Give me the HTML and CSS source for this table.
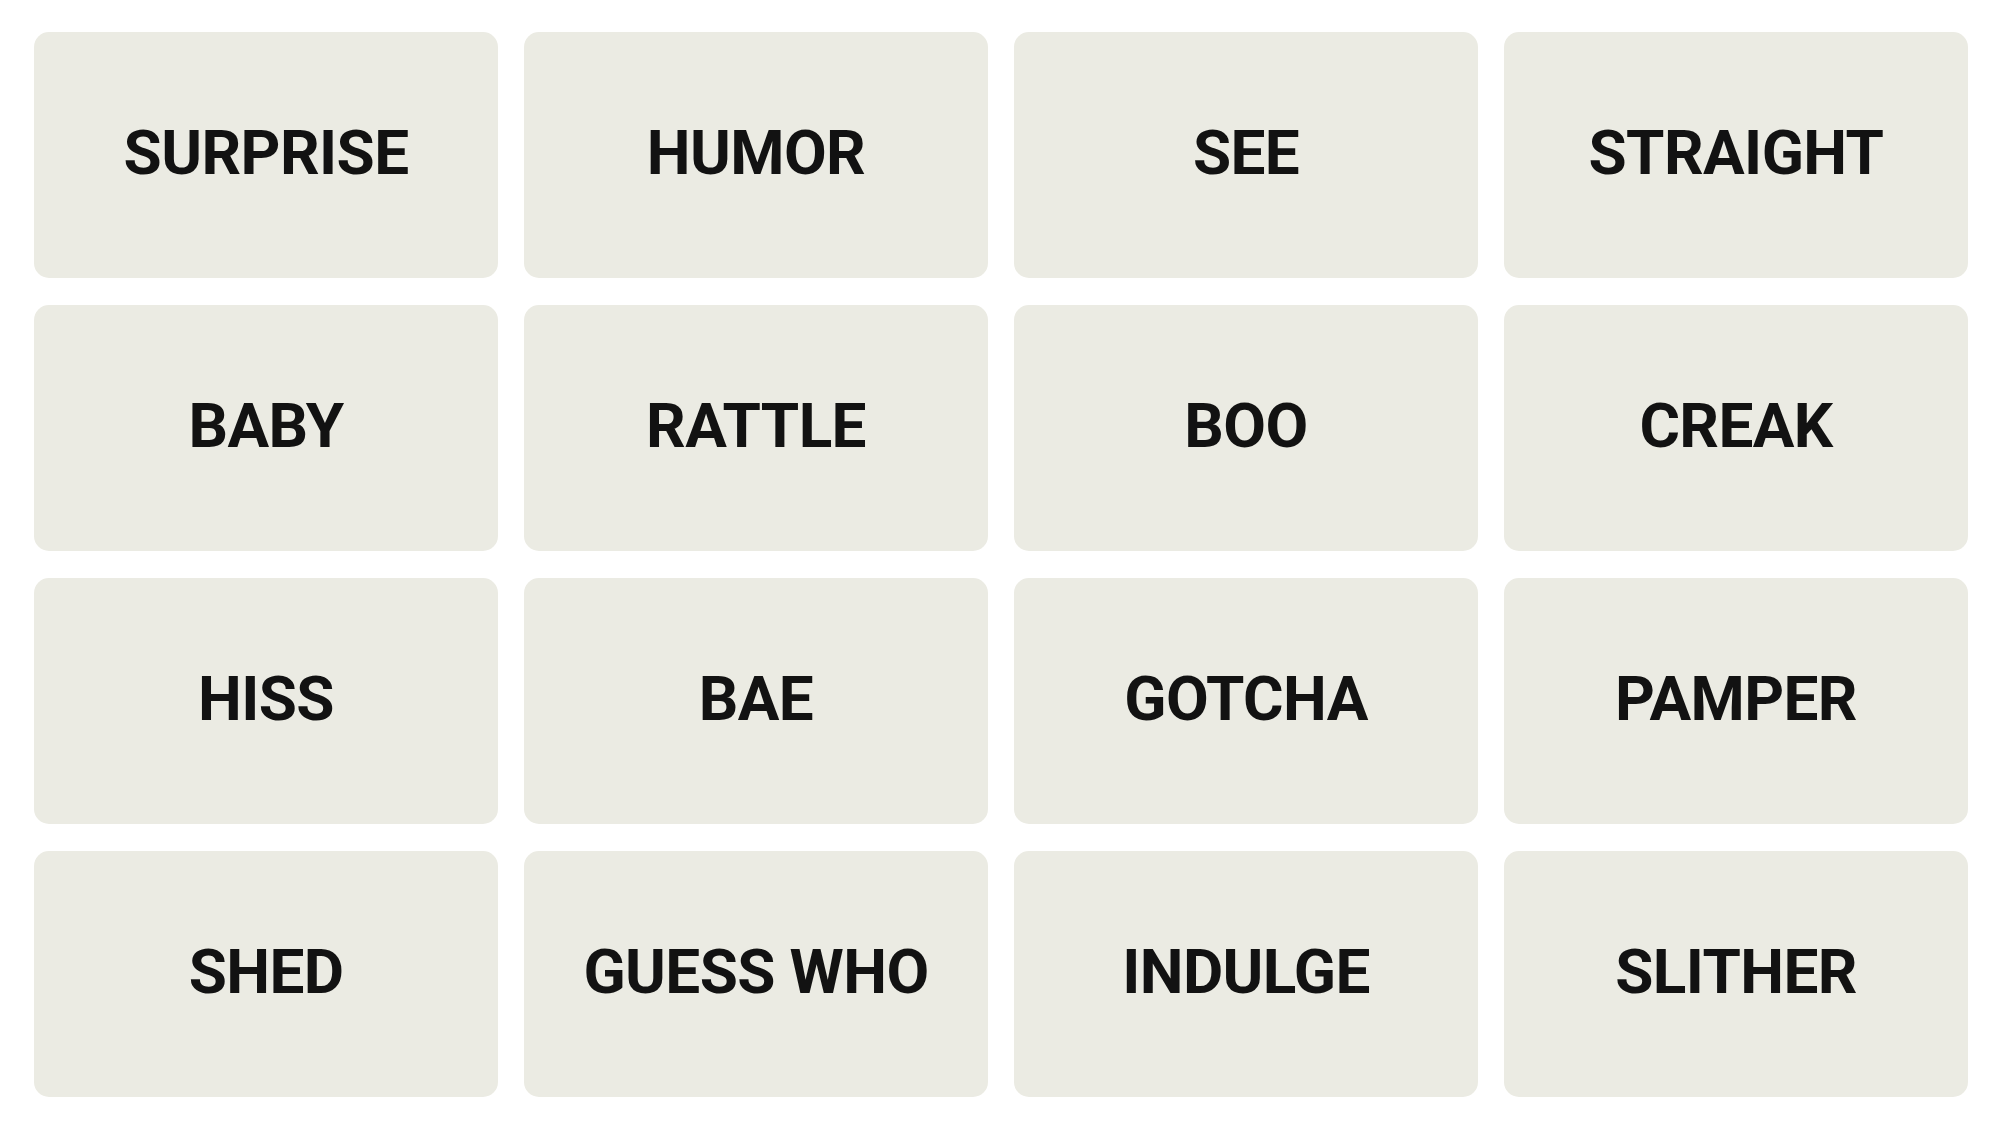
FILE: index.html
```html
<!DOCTYPE html>
<html lang="en">
<head>
<meta charset="utf-8">
<title>Connections</title>
<link rel="stylesheet" href="styles.css">
</head>
<body>
<div class="board">
  <div class="tile">SURPRISE</div>
  <div class="tile">HUMOR</div>
  <div class="tile">SEE</div>
  <div class="tile">STRAIGHT</div>
  <div class="tile">BABY</div>
  <div class="tile">RATTLE</div>
  <div class="tile">BOO</div>
  <div class="tile">CREAK</div>
  <div class="tile">HISS</div>
  <div class="tile">BAE</div>
  <div class="tile">GOTCHA</div>
  <div class="tile">PAMPER</div>
  <div class="tile">SHED</div>
  <div class="tile">GUESS WHO</div>
  <div class="tile">INDULGE</div>
  <div class="tile">SLITHER</div>
</div>
</body>
</html>
```

FILE: styles.css
```css
html, body {
  margin: 0;
  padding: 0;
  background: #ffffff;
}
.board {
  display: grid;
  grid-template-columns: repeat(4, 464px);
  grid-auto-rows: 246px;
  column-gap: 26px;
  row-gap: 27px;
  padding: 32px 0 0 34px;
}
.tile {
  background: #ebebe3;
  border-radius: 15px;
  display: flex;
  align-items: center;
  justify-content: center;
  padding-bottom: 6px;
  box-sizing: border-box;
  font-family: Roboto, "Liberation Sans", sans-serif;
  font-weight: 700;
  font-size: 62px;
  letter-spacing: -0.6px;
  color: #121212;
  text-transform: uppercase;
}
```
